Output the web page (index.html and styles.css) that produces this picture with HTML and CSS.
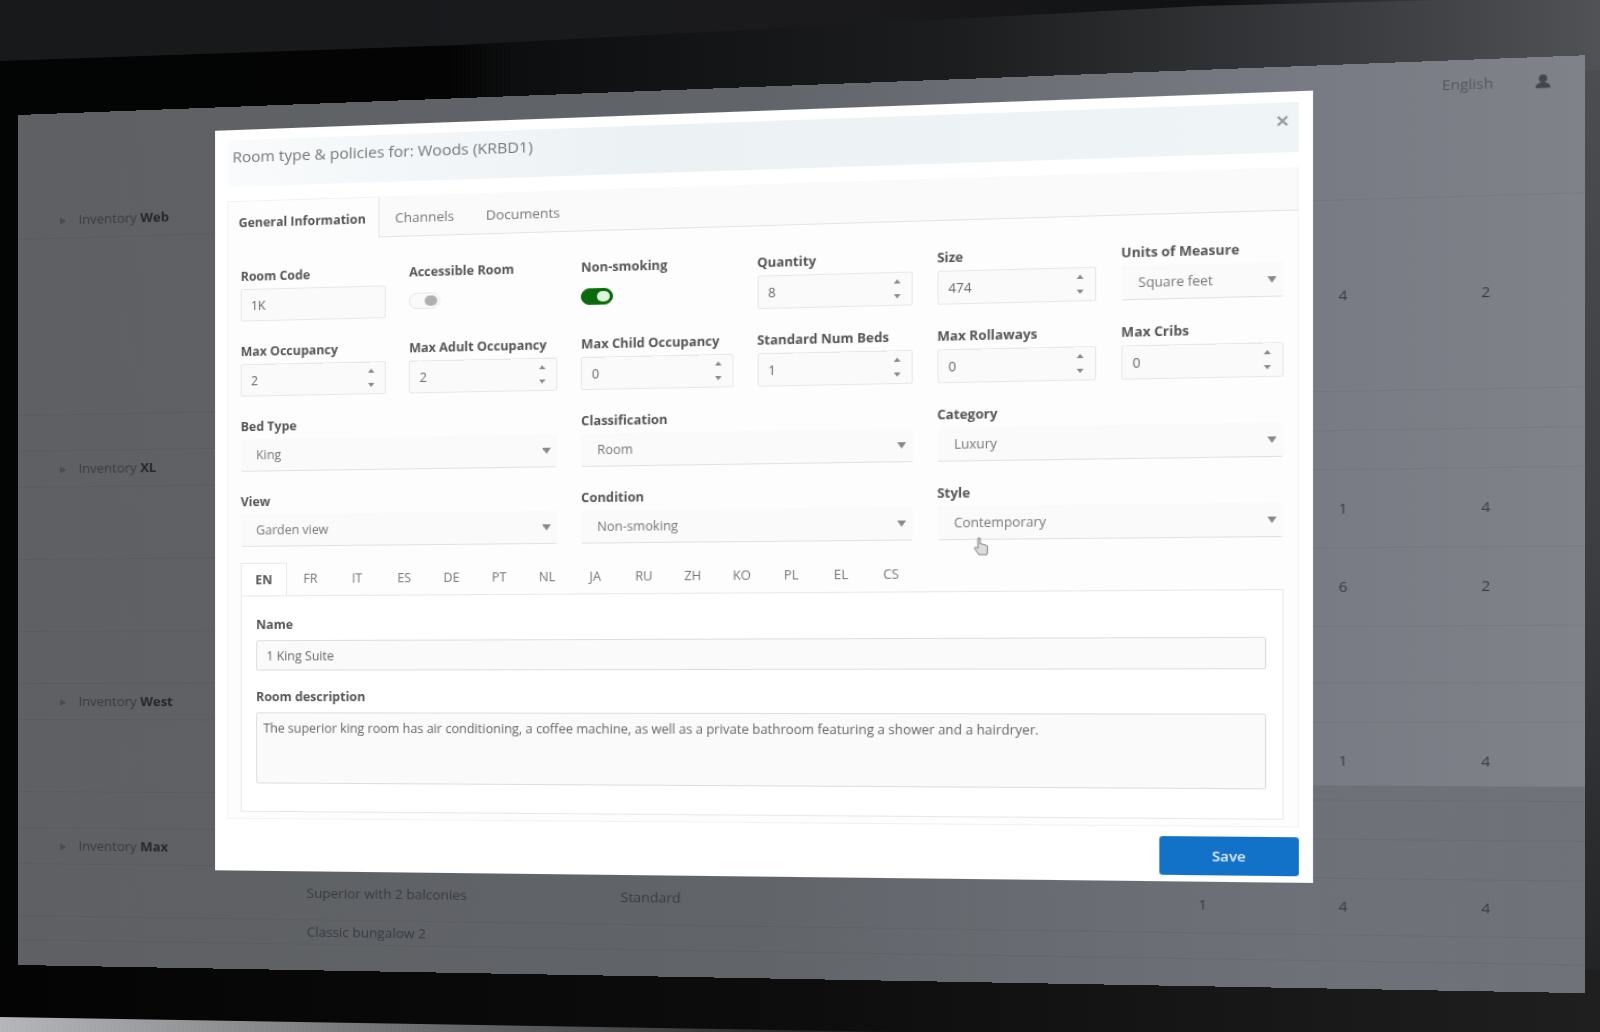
FILE: index.html
```html
<!DOCTYPE html>
<html lang="en">
<head>
<meta charset="utf-8">
<title>Room type editor</title>
<link rel="stylesheet" href="styles.css">
</head>
<body>
<svg class="bezel" viewBox="0 0 1600 1032" preserveAspectRatio="none" aria-hidden="true">
  <defs>
    <linearGradient id="frame" x1="0" x2="1" y1="0" y2="0">
      <stop offset="0" stop-color="#030404"/><stop offset=".28" stop-color="#040404"/><stop offset=".32" stop-color="#0d0e0f"/><stop offset=".6" stop-color="#1c1d1f"/><stop offset=".9" stop-color="#414346"/><stop offset="1" stop-color="#505255"/>
    </linearGradient>
    <linearGradient id="wall" x1="0" x2="1" y1="0" y2="0">
      <stop offset="0" stop-color="#17191b"/><stop offset=".6" stop-color="#1a1a1d"/><stop offset=".85" stop-color="#101112"/><stop offset="1" stop-color="#3a3b3d"/>
    </linearGradient>
    <linearGradient id="lower" x1="0" x2="1" y1="0" y2="0">
      <stop offset="0" stop-color="#040404"/><stop offset=".5" stop-color="#0d0d0d"/><stop offset="1" stop-color="#1f1f20"/>
    </linearGradient>
    <linearGradient id="desk" x1="0" x2="1" y1="0" y2="0">
      <stop offset="0" stop-color="#b4b6b9"/><stop offset=".4" stop-color="#77787a"/><stop offset="1" stop-color="#171717"/>
    </linearGradient>
    <linearGradient id="side" x1="0" x2="0" y1="0" y2="1">
      <stop offset="0" stop-color="#4b4d50"/><stop offset=".5" stop-color="#3d3e42"/><stop offset="1" stop-color="#1f2021"/>
    </linearGradient>
  </defs>
  <rect width="1600" height="1032" fill="url(#frame)"/>
  <path d="M0 0H1440L1200 6L460 45L0 61Z" fill="url(#wall)"/>
  <path d="M1570 70H1600V1032H1570Z" fill="url(#side)"/>
  <path d="M0 940L1600 970V1032H0Z" fill="url(#lower)"/>
  <path d="M0 1017L900 1032H0Z" fill="url(#desk)"/>
</svg>

<div class="screen">
  <header class="topbar">
    <a class="topbar-link" href="#">English</a>
    <button class="topbar-user" type="button" aria-label="Account">
      <svg viewBox="0 0 16 16"><circle cx="8" cy="5" r="4"/><path d="M1 15c0-4 3-6 7-6s7 2 7 6z"/></svg>
    </button>
  </header>
  <table class="rates">
    <colgroup><col class="c-group"><col class="c-room"><col class="c-type"><col class="c-num"><col class="c-num"><col class="c-last"></colgroup>
    <tbody>
      <tr class="group"><th colspan="6" scope="rowgroup"><span>▸</span> Inventory <b>Web</b></th></tr>
      <tr class="tall"><td></td><td></td><td></td><td></td><td>4</td><td>2</td></tr>
      <tr class="gap"><td colspan="6"></td></tr>
      <tr class="group"><th colspan="6" scope="rowgroup"><span>▸</span> Inventory <b>XL</b></th></tr>
      <tr class="item"><td></td><td></td><td></td><td></td><td>1</td><td>4</td></tr>
      <tr class="item"><td></td><td></td><td></td><td></td><td>6</td><td>2</td></tr>
      <tr class="gap large"><td colspan="6"></td></tr>
      <tr class="group"><th colspan="6" scope="rowgroup"><span>▸</span> Inventory <b>West</b></th></tr>
      <tr class="item"><td></td><td></td><td></td><td></td><td>1</td><td>4</td></tr>
      <tr class="gap"><td colspan="6"></td></tr>
      <tr class="group"><th colspan="6" scope="rowgroup"><span>▸</span> Inventory <b>Max</b></th></tr>
      <tr class="room"><td></td><td>Superior with 2 balconies</td><td>Standard</td><td>1</td><td>4</td><td>4</td></tr>
      <tr class="note"><td></td><td>Classic bungalow 2</td><td></td><td></td><td></td><td></td></tr>
    </tbody>
  </table>

  <form class="dialog" role="dialog" aria-labelledby="title">
    <header class="dialog-head">
      <h1 id="title">Room type &amp; policies for: Woods (KRBD1)</h1>
      <button class="close" type="button" aria-label="Close"><svg viewBox="0 0 10 10"><path d="M1 1l8 8M9 1l-8 8"/></svg></button>
    </header>
    <div class="panel">
      <nav class="tabs">
        <button class="tab active" type="button">General Information</button>
        <button class="tab" type="button">Channels</button>
        <button class="tab" type="button">Documents</button>
      </nav>
      <div class="fields">
        <div class="field"><label for="code">Room Code</label><input id="code" type="text" value="1K"></div>
        <div class="field"><label for="access">Accessible Room</label><input class="switch" id="access" type="checkbox"></div>
        <div class="field"><label for="smoke">Non-smoking</label><input class="switch" id="smoke" type="checkbox" checked></div>
        <div class="field"><label for="qty">Quantity</label><div class="box"><input id="qty" type="number" value="8"><svg class="spin" viewBox="0 0 8 20"><path d="M4 1l3 4H1zM4 19l3-4H1z"/></svg></div></div>
        <div class="field"><label for="size">Size</label><div class="box"><input id="size" type="number" value="474"><svg class="spin" viewBox="0 0 8 20"><path d="M4 1l3 4H1zM4 19l3-4H1z"/></svg></div></div>
        <div class="field"><label for="unit">Units of Measure</label><div class="box"><select id="unit"><option>Square feet</option></select><svg class="caret" viewBox="0 0 8 6"><path d="M0 0h8L4 6z"/></svg></div></div>

        <div class="field"><label for="occ">Max Occupancy</label><div class="box"><input id="occ" type="number" value="2"><svg class="spin" viewBox="0 0 8 20"><path d="M4 1l3 4H1zM4 19l3-4H1z"/></svg></div></div>
        <div class="field"><label for="adult">Max Adult Occupancy</label><div class="box"><input id="adult" type="number" value="2"><svg class="spin" viewBox="0 0 8 20"><path d="M4 1l3 4H1zM4 19l3-4H1z"/></svg></div></div>
        <div class="field"><label for="child">Max Child Occupancy</label><div class="box"><input id="child" type="number" value="0"><svg class="spin" viewBox="0 0 8 20"><path d="M4 1l3 4H1zM4 19l3-4H1z"/></svg></div></div>
        <div class="field"><label for="beds">Standard Num Beds</label><div class="box"><input id="beds" type="number" value="1"><svg class="spin" viewBox="0 0 8 20"><path d="M4 1l3 4H1zM4 19l3-4H1z"/></svg></div></div>
        <div class="field"><label for="roll">Max Rollaways</label><div class="box"><input id="roll" type="number" value="0"><svg class="spin" viewBox="0 0 8 20"><path d="M4 1l3 4H1zM4 19l3-4H1z"/></svg></div></div>
        <div class="field"><label for="cribs">Max Cribs</label><div class="box"><input id="cribs" type="number" value="0"><svg class="spin" viewBox="0 0 8 20"><path d="M4 1l3 4H1zM4 19l3-4H1z"/></svg></div></div>

        <div class="field wide"><label for="bed">Bed Type</label><div class="box"><select id="bed"><option>King</option></select><svg class="caret" viewBox="0 0 8 6"><path d="M0 0h8L4 6z"/></svg></div></div>
        <div class="field wide"><label for="class">Classification</label><div class="box"><select id="class"><option>Room</option></select><svg class="caret" viewBox="0 0 8 6"><path d="M0 0h8L4 6z"/></svg></div></div>
        <div class="field wide"><label for="cat">Category</label><div class="box"><select id="cat"><option>Luxury</option></select><svg class="caret" viewBox="0 0 8 6"><path d="M0 0h8L4 6z"/></svg></div></div>
        <div class="field wide"><label for="view">View</label><div class="box"><select id="view"><option>Garden view</option></select><svg class="caret" viewBox="0 0 8 6"><path d="M0 0h8L4 6z"/></svg></div></div>
        <div class="field wide"><label for="cond">Condition</label><div class="box"><select id="cond"><option>Non-smoking</option></select><svg class="caret" viewBox="0 0 8 6"><path d="M0 0h8L4 6z"/></svg></div></div>
        <div class="field wide"><label for="style">Style</label><div class="box"><select id="style"><option>Contemporary</option></select><svg class="caret" viewBox="0 0 8 6"><path d="M0 0h8L4 6z"/></svg>
          <svg class="pointer" viewBox="0 0 14 18" aria-hidden="true"><path d="M4 1.500q1-1 2 0v5l5 1.500q2 .5 1.500 2.500L12 17H5L1 11q0-1.500 1.500-1L4 11z"/></svg></div></div>
      </div>

      <div class="languages">
        <nav class="langs">
          <button class="lang active" type="button">EN</button><button class="lang" type="button">FR</button><button class="lang" type="button">IT</button><button class="lang" type="button">ES</button><button class="lang" type="button">DE</button><button class="lang" type="button">PT</button><button class="lang" type="button">NL</button><button class="lang" type="button">JA</button><button class="lang" type="button">RU</button><button class="lang" type="button">ZH</button><button class="lang" type="button">KO</button><button class="lang" type="button">PL</button><button class="lang" type="button">EL</button><button class="lang" type="button">CS</button>
        </nav>
        <div class="texts">
          <div class="field"><label for="name">Name</label><input id="name" type="text" value="1 King Suite"></div>
          <div class="field"><label for="desc">Room description</label><textarea id="desc">The superior king room has air conditioning, a coffee machine, as well as a private bathroom featuring a shower and a hairdryer.</textarea></div>
        </div>
      </div>
    </div>
    <footer class="actions"><button class="save" type="submit">Save</button></footer>
  </form>
</div>
</body>
</html>
```
FILE: styles.css
```css
* { box-sizing: border-box; }
html { background: #0d0e0f; }
body {
  margin: 0;
  min-height: 100vh;
  padding: 115px 0 60px 18px;
  overflow: hidden;
  position: relative;
  font: 13px/18px "Open Sans", "Noto Sans", sans-serif;
  color: #666;
}
button, input, select, textarea { font: inherit; color: inherit; margin: 0; }
.bezel { position: absolute; inset: 0; width: 100%; height: 100%; }

/* The monitor is seen from its left, so its right edge comes closer. */
.screen {
  position: relative;
  width: 90%;
  padding-bottom: 25px;
  transform: perspective(1060px) rotateY(-4deg);
  transform-origin: left 68%;
  background:
    linear-gradient(90deg, #0000, #00000020) right bottom / 50% 22% no-repeat,
    linear-gradient(90deg, #5e6063, #616469 50%, #777a82 82%, #7f8289);
}

.topbar { display: flex; justify-content: flex-end; align-items: center; gap: 34px; height: 88px; padding: 0 28px 44px 0; }
.topbar-link { color: #55585e; text-decoration: none; }
.topbar-user { width: 14px; height: 14px; padding: 0; border: 0; background: none; }
.topbar-user svg { display: block; fill: #44464c; }

.rates { width: 100%; border-collapse: collapse; table-layout: fixed; color: #383b40; }
.c-group { width: 284px; }
.c-room { width: 297px; }
.c-num { width: 120px; }
.c-last { width: 86px; }
.rates td, .rates th { padding: 0; text-align: left; border-bottom: 1px solid #0000000c; }
.rates th { padding-left: 42px; font-weight: 400; }
.rates th b { color: #24272b; }
.rates th span { color: #484b50; padding-right: 8px; }
.group { height: 36px; }
.tall { height: 176px; }
.item { height: 72px; }
.gap { height: 36px; }
.gap.large { height: 52px; }
.room { height: 52px; }
.note { height: 24px; }

.dialog {
  position: absolute;
  top: 23px;
  left: 195px;
  right: 16%;
  padding: 10px 12px 6px;
  background: #fff;
}
.dialog-head { display: flex; justify-content: space-between; align-items: flex-start; height: 46px; padding: 5px 9px 0 5px; background: linear-gradient(90deg, #f9fbfc, #ecf1f4 40%, #eff4f7); }
h1 { margin: 0; font-size: 15px; line-height: 22px; font-weight: 400; color: #777; }
.close { width: 10px; height: 24px; padding: 0; border: 0; background: none; }
.close svg { width: 10px; fill: none; stroke: #999; stroke-width: 2; }

.panel { margin-top: 14px; border: 1px solid #f2f2f2; border-top: 0; padding-bottom: 6px; background: #fdfdfd; }
.tabs { display: flex; height: 40px; border-bottom: 1px solid #e4e4e4; background: #fafafa; }
.tab { padding: 2px 15px 0; border: 0; background: none; color: #777; }
.tab.active { margin-bottom: -1px; padding: 2px 12px 0 10px; border-right: 1px solid #e4e4e4; border-top: 1px solid #f2f2f2; background: #fdfdfd; font-size: 12px; font-weight: 700; color: #555; }

.fields { display: grid; grid-template-columns: repeat(6, 1fr); gap: 21px 22px; padding: 26px 12px 0 12px; }
.field { display: flex; flex-direction: column; gap: 3px; min-width: 0; font-size: 12px; }
.field.wide { grid-column: span 2; }
label { font-weight: 700; color: #555; white-space: nowrap; }
input, select, textarea { width: 100%; border: 1px solid #e8e8e8; border-radius: 2px; background: #fafafa; }
input, select { height: 32px; padding: 0 9px; }
.box { position: relative; display: flex; align-items: center; }
input[type="number"] { appearance: textfield; }
input[type="number"]::-webkit-inner-spin-button { appearance: none; }
select { appearance: none; padding: 0 14px; border-color: #fafafa #fafafa #e2e2e2; color: #777; }
.spin, .caret { position: absolute; fill: #888; pointer-events: none; }
.spin { right: 10px; width: 8px; height: 20px; }
.caret { right: 6px; width: 8px; height: 6px; }
.pointer { position: absolute; left: 32px; top: 29px; width: 14px; height: 18px; fill: #ddd; stroke: #888; stroke-width: 1; }

.switch { appearance: none; width: 30px; height: 16px; margin: 8px 0 0; padding: 2px; border: 1px solid #e8e8e8; border-radius: 8px; background: #fafafa; }
.switch::before { content: ""; display: block; width: 12px; height: 10px; margin-left: auto; border-radius: 5px; background: #b0b0b0; }
.switch:checked { border-color: #0c760c; background: #0c6a0c; }
.switch:checked::before { background: #dff5df; }

.languages { margin: 16px 12px 0 12px; }
.langs { display: flex; }
.lang { width: 45px; height: 32px; padding: 0; border: 0; background: none; font-size: 12px; color: #777; }
.lang.active { position: relative; margin-bottom: -1px; border: 1px solid #e8e8e8; border-bottom: 0; background: #fff; font-weight: 700; color: #555; }
.texts { display: flex; flex-direction: column; gap: 17px; padding: 19px 14px 27px; border: 1px solid #e8e8e8; background: #fff; }
.texts .field { gap: 6px; }
.texts input { height: 30px; }
textarea { height: 70px; padding: 6px; resize: none; display: block; }
#name, #desc { border-color: #dedede; }

.actions { display: flex; justify-content: flex-end; padding-top: 9px; }
.save { width: 120px; height: 36px; border: 0; border-radius: 3px; background: #1272c8; color: #e4f1fc; font-weight: 600; }
```
